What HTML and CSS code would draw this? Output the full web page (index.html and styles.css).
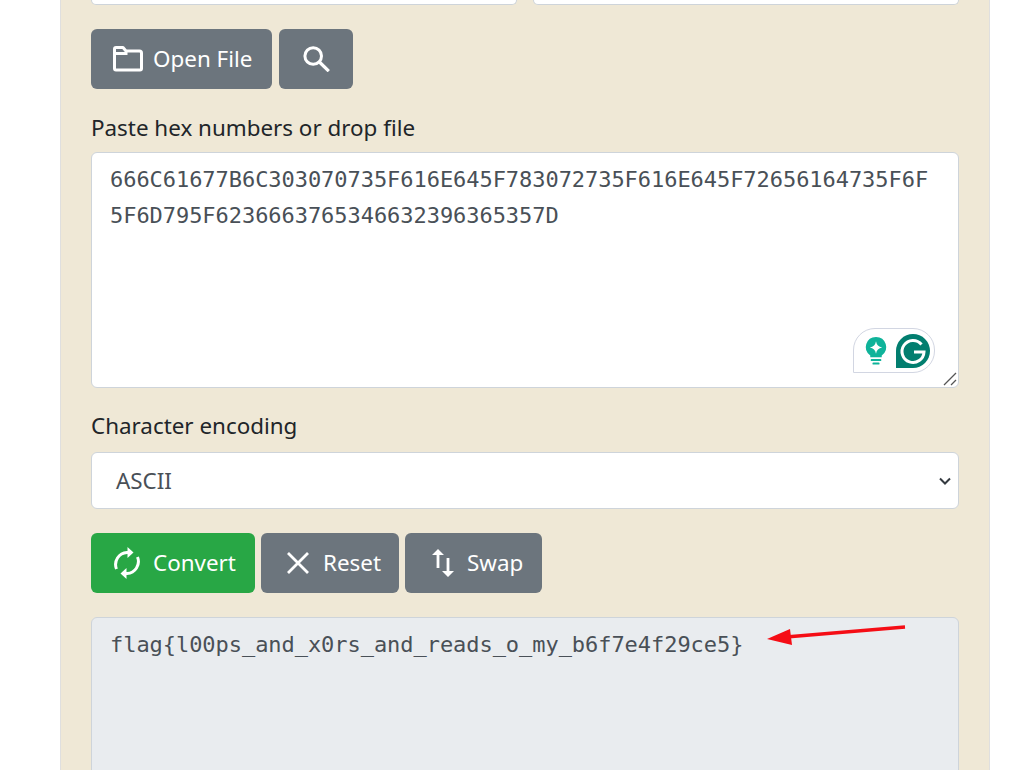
FILE: index.html
```html
<!DOCTYPE html>
<html lang="en">
<head>
<meta charset="utf-8">
<title>Hex to ASCII</title>
<link rel="stylesheet" href="styles.css">
</head>
<body>
<main class="panel">
  <div class="top-row"><div class="stub"></div><div class="stub"></div></div>
  <div class="btn-row first">
    <button class="btn grey open">
      <svg width="30" height="26" viewBox="0 0 30 26" fill="none" stroke="#fff" stroke-width="3" stroke-linejoin="round"><path d="M1.500 6V3q0-1.500 1.500-1.500h7l3 3.500h13.500q2 0 2 2v15.500q0 1.500-1.500 1.500H3q-1.500 0-1.500-1.500z"/><path d="M1.500 7.500h13"/></svg>
      <span>Open File</span>
    </button>
    <button class="btn grey search">
      <svg width="27" height="26" viewBox="0 0 27 26" fill="none" stroke="#fff" stroke-width="3"><circle cx="10.200" cy="10" r="8.300"/><path d="M16.400 16l9.400 9.200" stroke-width="3.200"/></svg>
    </button>
  </div>
  <label class="label hex-label">Paste hex numbers or drop file</label>
  <div class="hex-box">
    <div class="mono">666C61677B6C303070735F616E645F783072735F616E645F72656164735F6F<br>5F6D795F6236663765346632396365357D</div>
    <div class="gram">
      <svg width="24" height="30" viewBox="0 0 26 34"><path d="M13 1a11.500 11.500 0 0 0-6.500 21v2h13v-2A11.500 11.500 0 0 0 13 1z" fill="#0fb39a"/><path d="M13 6q1 6 7 7-6 1-7 7-1-6-7-7 6-1 7-7z" fill="#fff"/><rect x="7" y="26" width="12" height="2.400" rx="1" fill="#0fb39a"/><rect x="9" y="30" width="8" height="2.400" rx="1" fill="#0fb39a"/></svg>
      <svg width="34" height="34" viewBox="0 0 34 34"><path d="M17 0a17 17 0 0 1 0 34H0V17A17 17 0 0 1 17 0z" fill="#027e6f"/><path d="M25.500 10.500A11 11 0 1 0 28 18H18" fill="none" stroke="#fff" stroke-width="3"/></svg>
    </div>
    <svg class="grip" width="14" height="14" viewBox="0 0 14 14" stroke="#555" stroke-width="1.300"><path d="M1 13L13 1M8 13l5-5"/></svg>
  </div>
  <label class="label enc-label">Character encoding</label>
  <div class="select"><span>ASCII</span>
    <svg width="12" height="8" viewBox="0 0 12 8" fill="none" stroke="#343a40" stroke-width="2"><path d="M1 1.500l5 5 5-5"/></svg>
  </div>
  <div class="btn-row second">
    <button class="btn green convert">
      <svg width="28" height="34" viewBox="0 0 28 34" fill="none" stroke="#fff" stroke-width="3"><path d="M3.500 23A12 12 0 0 1 14 6.500h3"/><path d="M24.500 11A12 12 0 0 1 14 27.500h-3"/><path d="M14.500 1l6 5.500-6 5.500z" fill="#fff" stroke="none"/><path d="M13.500 22l-6 5.500 6 5.500z" fill="#fff" stroke="none"/></svg>
      <span>Convert</span>
    </button>
    <button class="btn grey reset">
      <svg width="22" height="22" viewBox="0 0 22 22" stroke="#fff" stroke-width="2.800"><path d="M1 1l20 20M21 1L1 21"/></svg>
      <span>Reset</span>
    </button>
    <button class="btn grey swap">
      <svg width="22" height="28" viewBox="0 0 22 28" fill="none" stroke="#fff" stroke-width="2.800"><path d="M6 4v15M16 9v15"/><path d="M6 0l6 6H0zM16 28l-6-6h12z" fill="#fff" stroke="none"/></svg>
      <span>Swap</span>
    </button>
  </div>
  <div class="output"><div class="mono">flag{l00ps_and_x0rs_and_reads_o_my_b6f7e4f29ce5}</div></div>
  <svg class="arrow" width="140" height="24" viewBox="0 0 140 24"><path d="M22 11.700L138 2" stroke="#f50d15" stroke-width="3.600" fill="none"/><path d="M0 14L23 4l2 16z" fill="#f50d15"/></svg>
</main>
</body>
</html>
```

FILE: styles.css
```css
html, body { margin: 0; padding: 0; height: 770px; overflow: hidden; background: #fff; }
body { font-family: "Noto Sans", "Open Sans", sans-serif; color: #212529; }
.panel {
  position: relative;
  box-sizing: border-box;
  width: 930px;
  height: 770px;
  margin-left: 60px;
  padding: 0 30px;
  background: #efe8d6;
  border-left: 1px solid #dfdfdf;
  border-right: 1px solid #dfdfdf;
  overflow: hidden;
}
.top-row { display: flex; gap: 16px; }
.stub {
  flex: 1;
  height: 5px;
  box-sizing: border-box;
  background: #fff;
  border: 1px solid #ced4da;
  border-top: 0;
  border-radius: 0 0 6px 6px;
}
.btn-row { display: flex; gap: 6px; }
.btn-row.first { margin-top: 24px; gap: 7px; }
.btn-row.second { margin-top: 24px; }
.btn {
  display: flex;
  align-items: center;
  justify-content: flex-start;
  height: 60px;
  padding: 0;
  border: 0;
  border-radius: 6px;
  color: #fff;
  font: 22.4px/36px "Noto Sans", "Open Sans", sans-serif;
}
.grey { background: #6c757d; }
.green { background: #28a745; }
.open { width: 181px; gap: 10px; padding-left: 22px; }
.search { width: 74px; padding-left: 24px; }
.convert { width: 164px; gap: 12px; padding-left: 22px; }
.reset { width: 138px; gap: 14px; padding-left: 26px; }
.swap { width: 137px; gap: 13px; padding-left: 27px; }
.label { display: block; font-size: 22.4px; line-height: 36px; }
.hex-label { margin-top: 21px; }
.enc-label { margin-top: 20px; }
.hex-box {
  position: relative;
  box-sizing: border-box;
  height: 236px;
  margin-top: 6px;
  padding: 9px 18px;
  background: #fff;
  border: 1px solid #ced4da;
  border-radius: 6px;
}
.mono {
  font: 22px/36px "DejaVu Sans Mono", "Liberation Mono", monospace;
  letter-spacing: -0.05px;
  color: #495057;
  white-space: pre;
}
.gram {
  position: absolute;
  right: 23px;
  bottom: 14px;
  width: 82px;
  height: 45px;
  box-sizing: border-box;
  display: flex;
  align-items: center;
  gap: 8px;
  padding-left: 10px;
  background: #fff;
  border: 1px solid #d2d6e2;
  border-radius: 22px 22px 22px 0;
}
.grip { position: absolute; right: 1px; bottom: 1px; }
.select {
  display: flex;
  align-items: center;
  justify-content: space-between;
  box-sizing: border-box;
  height: 57px;
  margin-top: 8px;
  padding: 0 7px 0 24px;
  background: #fff;
  border: 1px solid #ced4da;
  border-radius: 6px;
  color: #495057;
  font-size: 22.4px;
}
.output {
  box-sizing: border-box;
  height: 240px;
  margin-top: 24px;
  padding: 9px 18px;
  background: #e9ecef;
  border: 1px solid #ced4da;
  border-radius: 6px;
}
.arrow { position: absolute; left: 706px; top: 625px; }
```
